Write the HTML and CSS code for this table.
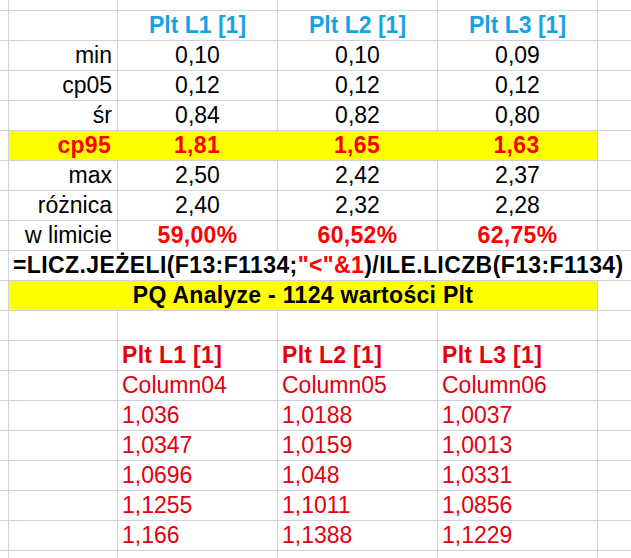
FILE: index.html
```html
<!DOCTYPE html>
<html lang="pl">
<head>
<meta charset="utf-8">
<title>Plt</title>
<link rel="stylesheet" href="styles.css">
</head>
<body>
<div class="sheet">
  <!-- row 1 (partial) -->
  <div class="c"></div><div class="c"></div><div class="c"></div><div class="c"></div><div class="c"></div><div class="c"></div>

  <!-- headers -->
  <div class="c"></div><div class="c"></div>
  <div class="c ctr hdr">Plt L1 [1]</div><div class="c ctr hdr">Plt L2 [1]</div><div class="c ctr hdr">Plt L3 [1]</div>
  <div class="c"></div>

  <div class="c"></div><div class="c lbl">min</div>
  <div class="c ctr">0,10</div><div class="c ctr">0,10</div><div class="c ctr">0,09</div><div class="c"></div>

  <div class="c"></div><div class="c lbl">cp05</div>
  <div class="c ctr">0,12</div><div class="c ctr">0,12</div><div class="c ctr">0,12</div><div class="c"></div>

  <div class="c"></div><div class="c lbl">śr</div>
  <div class="c ctr">0,84</div><div class="c ctr">0,82</div><div class="c ctr">0,80</div><div class="c"></div>

  <div class="c"></div>
  <div class="c hl-row">
    <div class="lbl red b">cp95</div>
    <div class="ctr red b">1,81</div>
    <div class="ctr red b">1,65</div>
    <div class="ctr red b">1,63</div>
  </div>
  <div class="c"></div>

  <div class="c"></div><div class="c lbl">max</div>
  <div class="c ctr">2,50</div><div class="c ctr">2,42</div><div class="c ctr">2,37</div><div class="c"></div>

  <div class="c"></div><div class="c lbl">różnica</div>
  <div class="c ctr">2,40</div><div class="c ctr">2,32</div><div class="c ctr">2,28</div><div class="c"></div>

  <div class="c"></div><div class="c lbl">w limicie</div>
  <div class="c ctr red b">59,00%</div><div class="c ctr red b">60,52%</div><div class="c ctr red b">62,75%</div><div class="c"></div>

  <div class="c"></div>
  <div class="c formula b">=LICZ.JEŻELI(F13:F1134;<span class="red">"&lt;"&amp;1</span>)/ILE.LICZB(F13:F1134)</div>

  <div class="c"></div>
  <div class="c pq b">PQ Analyze - 1124 wartości Plt</div>
  <div class="c"></div>

  <div class="c"></div><div class="c"></div><div class="c"></div><div class="c"></div><div class="c"></div><div class="c"></div>

  <div class="c"></div><div class="c"></div>
  <div class="c lft dred b">Plt L1 [1]</div><div class="c lft dred b">Plt L2 [1]</div><div class="c lft dred b">Plt L3 [1]</div><div class="c"></div>

  <div class="c"></div><div class="c"></div>
  <div class="c lft dred">Column04</div><div class="c lft dred">Column05</div><div class="c lft dred">Column06</div><div class="c"></div>

  <div class="c"></div><div class="c"></div>
  <div class="c lft dred">1,036</div><div class="c lft dred">1,0188</div><div class="c lft dred">1,0037</div><div class="c"></div>

  <div class="c"></div><div class="c"></div>
  <div class="c lft dred">1,0347</div><div class="c lft dred">1,0159</div><div class="c lft dred">1,0013</div><div class="c"></div>

  <div class="c"></div><div class="c"></div>
  <div class="c lft dred">1,0696</div><div class="c lft dred">1,048</div><div class="c lft dred">1,0331</div><div class="c"></div>

  <div class="c"></div><div class="c"></div>
  <div class="c lft dred">1,1255</div><div class="c lft dred">1,1011</div><div class="c lft dred">1,0856</div><div class="c"></div>

  <div class="c"></div><div class="c"></div>
  <div class="c lft dred">1,166</div><div class="c lft dred">1,1388</div><div class="c lft dred">1,1229</div><div class="c"></div>

  <div class="c"></div><div class="c"></div><div class="c"></div><div class="c"></div><div class="c"></div><div class="c"></div>
</div>
</body>
</html>
```
FILE: styles.css
```css
html, body {
  margin: 0;
  padding: 0;
  background: #ffffff;
  overflow: hidden;
}

.sheet {
  display: grid;
  grid-template-columns: 9px 109px 160px 160px 160px 40px;
  grid-template-rows: 11px repeat(18, 30px) 30px;
  font-family: "Liberation Sans", Arial, sans-serif;
  font-size: 23px;
  color: #000000;
  width: 638px;
}

.c {
  box-sizing: border-box;
  border-right: 1px solid #cdd3de;
  border-bottom: 1px solid #cdd3de;
  line-height: 28px;
  white-space: nowrap;
  overflow: visible;
}

.lbl {
  text-align: right;
  padding-right: 5px;
}

.ctr {
  text-align: center;
}

.lft {
  text-align: left;
  padding-left: 4px;
}

.hdr {
  color: #17a3e2;
  font-weight: bold;
}

.b {
  font-weight: bold;
  letter-spacing: 0.3px;
}

.red {
  color: #ff0000;
}

.dred {
  color: #e5000f;
}

.hl-row {
  grid-column: span 4;
  background: #ffff00;
  display: grid;
  grid-template-columns: 108px 160px 160px 159px;
}

.hl-row > .lbl {
  padding-right: 6px;
}

.formula {
  grid-column: span 5;
  padding-left: 4px;
  border-right: none;
  letter-spacing: 0.4px;
}

.pq {
  grid-column: span 4;
  background: #ffff00;
  text-align: center;
}
```
